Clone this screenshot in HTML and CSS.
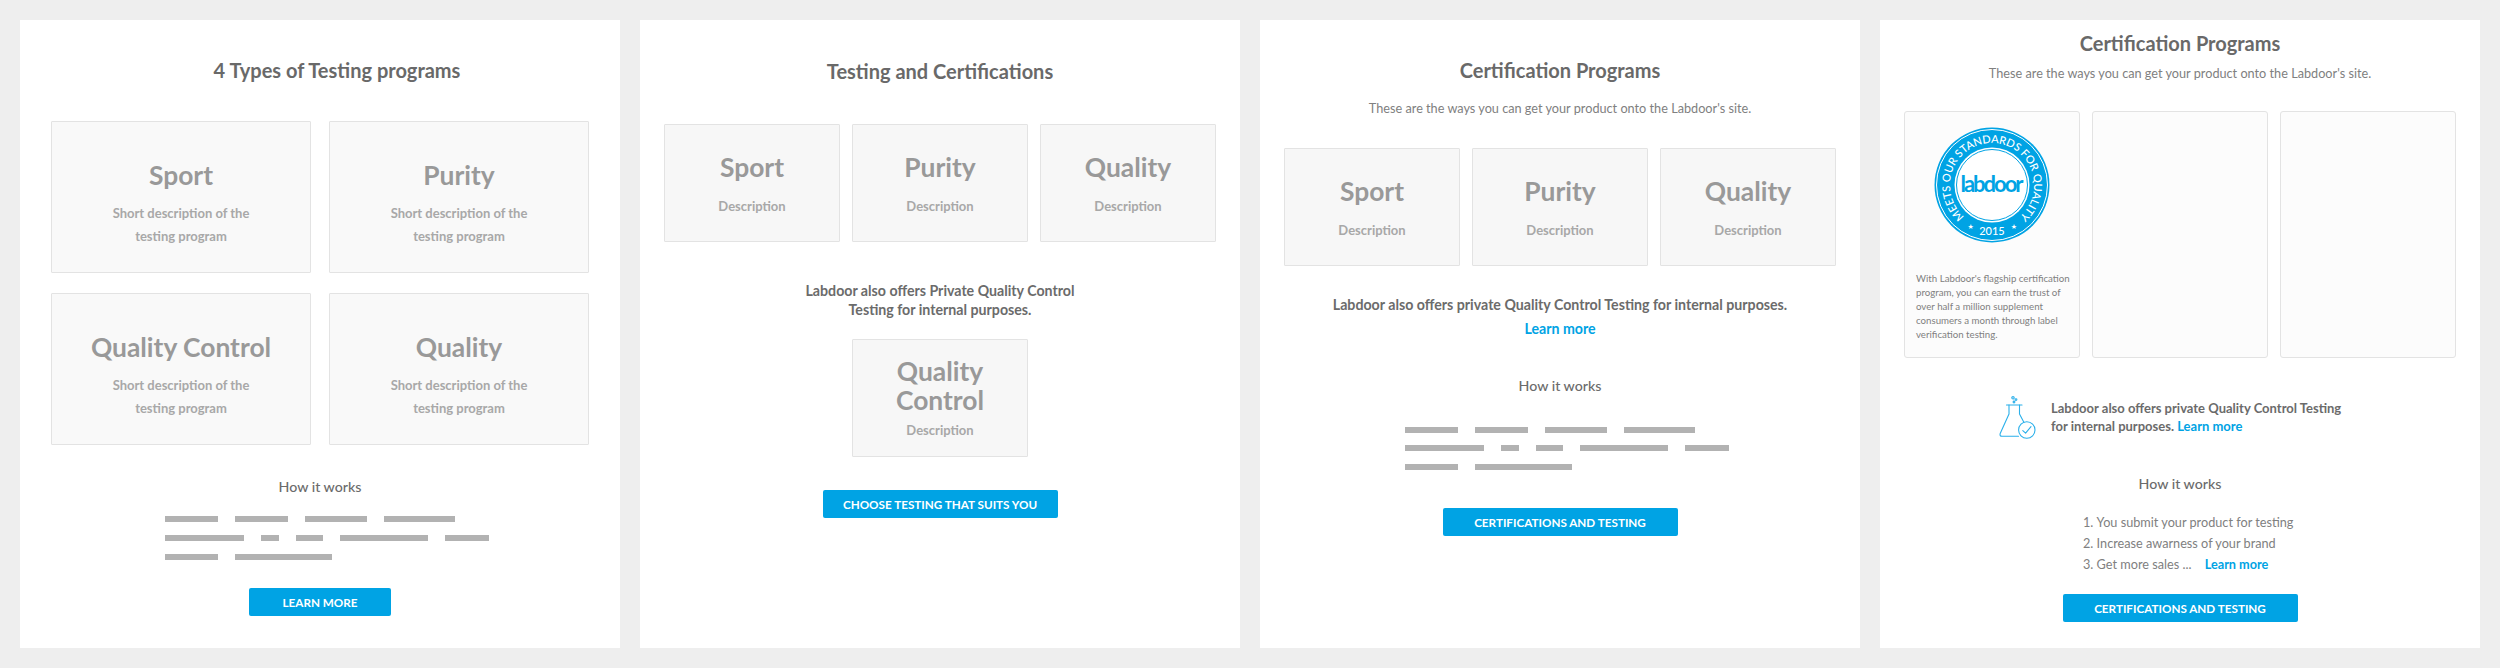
FILE: index.html
```html
<!DOCTYPE html>
<html lang="en">
<head>
<title>Labdoor testing programs - layout options</title>
<meta charset="utf-8">
<link rel="stylesheet" href="styles.css">
</head>
<body>

<!-- option 1: four types, two by two -->
<section class="panel panel-one">
	<h2 class="title">4 Types of Testing programs</h2>
	<div class="grid-two">
		<div class="card card-large"><h3>Sport</h3><p>Short description of the<br>testing program</p></div>
		<div class="card card-large"><h3>Purity</h3><p>Short description of the<br>testing program</p></div>
		<div class="card card-large"><h3>Quality Control</h3><p>Short description of the<br>testing program</p></div>
		<div class="card card-large"><h3>Quality</h3><p>Short description of the<br>testing program</p></div>
	</div>
	<h4 class="how">How it works</h4>
	<div class="bars">
		<div class="bar-row"><i style="width:53px"></i><i style="width:53px"></i><i style="width:62px"></i><i style="width:71px"></i></div>
		<div class="bar-row"><i style="width:79px"></i><i style="width:18px"></i><i style="width:27px"></i><i style="width:88px"></i><i style="width:44px"></i></div>
		<div class="bar-row"><i style="width:53px"></i><i style="width:97px"></i></div>
	</div>
	<a class="btn btn-small">LEARN MORE</a>
</section>

<!-- option 2: three plus private testing card -->
<section class="panel panel-two">
	<h2 class="title">Testing and Certifications</h2>
	<div class="row-three">
		<div class="card card-small"><h3>Sport</h3><p>Description</p></div>
		<div class="card card-small"><h3>Purity</h3><p>Description</p></div>
		<div class="card card-small"><h3>Quality</h3><p>Description</p></div>
	</div>
	<p class="also">Labdoor also offers Private Quality Control<br>Testing for internal purposes.</p>
	<div class="card card-small card-tight"><h3>Quality<br>Control</h3><p>Description</p></div>
	<a class="btn">CHOOSE TESTING THAT SUITS YOU</a>
</section>

<!-- option 3 -->
<section class="panel panel-three">
	<h2 class="title">Certification Programs</h2>
	<p class="sub">These are the ways you can get your product onto the Labdoor's site.</p>
	<div class="row-three">
		<div class="card card-small"><h3>Sport</h3><p>Description</p></div>
		<div class="card card-small"><h3>Purity</h3><p>Description</p></div>
		<div class="card card-small"><h3>Quality</h3><p>Description</p></div>
	</div>
	<p class="also">Labdoor also offers private Quality Control Testing for internal purposes.</p>
	<a class="more">Learn more</a>
	<h4 class="how">How it works</h4>
	<div class="bars">
		<div class="bar-row"><i style="width:53px"></i><i style="width:53px"></i><i style="width:62px"></i><i style="width:71px"></i></div>
		<div class="bar-row"><i style="width:79px"></i><i style="width:18px"></i><i style="width:27px"></i><i style="width:88px"></i><i style="width:44px"></i></div>
		<div class="bar-row"><i style="width:53px"></i><i style="width:97px"></i></div>
	</div>
	<a class="btn">CERTIFICATIONS AND TESTING</a>
</section>

<!-- option 4: badge card and numbered steps -->
<section class="panel panel-four">
	<h2 class="title">Certification Programs</h2>
	<p class="sub">These are the ways you can get your product onto the Labdoor's site.</p>
	<div class="row-three">
		<div class="card card-badge">
			<svg class="badge" viewBox="0 0 116 116" width="116" height="116">
				<defs>
					<path id="arc-top" d="M37 94.4 A42 42 0 1 1 79 94.4"/>
				</defs>
				<circle cx="58" cy="58" r="57.5" fill="#00a3e4"/>
				<circle cx="58" cy="58" r="55.5" fill="none" stroke="#fff" stroke-width="1"/>
				<circle cx="58" cy="58" r="37.5" fill="#fff"/>
				<circle cx="58" cy="58" r="35.5" fill="none" stroke="#00a3e4" stroke-width="1"/>
				<text class="badge-ring"><textPath href="#arc-top" startOffset="50%" text-anchor="middle">MEETS OUR STANDARDS FOR QUALITY</textPath></text>
				<text class="badge-year" x="58" y="108" text-anchor="middle">2015</text>
				<text class="badge-star" x="36.7" y="102" text-anchor="middle">★</text>
				<text class="badge-star" x="80" y="102" text-anchor="middle">★</text>
				<text class="badge-logo" x="58" y="65" text-anchor="middle" textLength="63">labdoor</text>
			</svg>
			<p>With Labdoor's flagship certification<br>program, you can earn the trust of<br>over half a million supplement<br>consumers a month through label<br>verification testing.</p>
		</div>
		<div class="card card-badge"></div>
		<div class="card card-badge"></div>
	</div>
	<div class="offer">
		<svg class="flask" viewBox="0 0 37 43" width="37" height="43" fill="none" stroke="#2bb0ea" stroke-width="1.1" stroke-linecap="round" stroke-linejoin="round">
			<circle cx="14" cy="1.8" r="1.2"/>
			<circle cx="17" cy="3.6" r="0.9"/>
			<circle cx="15" cy="6" r="0.9"/>
			<path d="M7.5 9 H23"/>
			<path d="M10 9 V18 L1.2 37.5 Q0.4 40.3 3 40.3 H19.5"/>
			<path d="M20.5 9 V18 L25 26.5"/>
			<circle cx="27.8" cy="34" r="8.2"/>
			<path d="M23.8 34.6 L26.6 37.2 L32 30.6"/>
		</svg>
		<p>Labdoor also offers private Quality Control Testing<br>for internal purposes. <a class="more-inline">Learn more</a></p>
	</div>
	<h4 class="how">How it works</h4>
	<ol class="steps">
		<li>You submit your product for testing</li>
		<li>Increase awarness of your brand</li>
		<li>Get more sales ... <a class="more-inline">Learn more</a></li>
	</ol>
	<a class="btn">CERTIFICATIONS AND TESTING</a>
</section>

</body>
</html>
```

FILE: styles.css
```css
* { box-sizing: border-box; }

body {
	margin: 0;
	height: 668px;
	padding: 20px;
	display: flex;
	gap: 20px;
	background: #eee;
	font-family: "Lato", "Liberation Sans", sans-serif;
	color: #666;
	overflow: hidden;
}

h2, h3, h4, p, ol { margin: 0; padding: 0; }

.panel {
	width: 600px;
	height: 628px;
	display: flex;
	flex-direction: column;
	align-items: center;
	background: #fff;
	text-align: center;
}

.title {
	font-size: 20px;
	line-height: 30px;
	font-weight: 700;
	color: #696969;
}

.sub {
	font-size: 12.7px;
	line-height: 20px;
	color: #808080;
}

.how {
	font-size: 14.2px;
	line-height: 20px;
	font-weight: 500;
	color: #6b6b6b;
}

.also {
	font-size: 14.2px;
	line-height: 18.5px;
	font-weight: 700;
	color: #6b6b6b;
}

.btn {
	display: block;
	width: 235px;
	height: 28px;
	border-radius: 2px;
	background: #00a3e4;
	color: #fff;
	font-size: 11.7px;
	line-height: 28px;
	font-weight: 700;
}

.btn-small { width: 142px; }

.more {
	font-size: 14.2px;
	line-height: 20px;
	font-weight: 700;
	color: #00a3e4;
}

.more-inline {
	font-weight: 700;
	color: #00a3e4;
}

/* cards */
.grid-two {
	display: grid;
	grid-template-columns: 260px 260px;
	column-gap: 18px;
	row-gap: 20px;
}

.row-three {
	display: flex;
	gap: 12px;
}

.card {
	display: flex;
	flex-direction: column;
	align-items: center;
	justify-content: center;
	border: 1px solid #e3e3e3;
	border-radius: 1px;
	background: #f7f7f7;
}

.card h3 {
	font-size: 26.4px;
	line-height: 34px;
	font-weight: 700;
	color: #999;
}

.card p {
	font-size: 13px;
	font-weight: 700;
	color: #a8a8a8;
}

.card-large {
	height: 152px;
	padding-top: 12px;
	background: #f9f9f9;
}

.card-large h3 { margin-bottom: 10px; }
.card-large p { line-height: 22.6px; }

.card-small {
	width: 176px;
	height: 118px;
}

.card-small h3 { margin-bottom: 12px; }
.card-small p { line-height: 20px; }

.card-tight { padding-top: 1px; }
.card-tight h3 { line-height: 29px; margin-bottom: 5px; }

.card-badge {
	width: 176px;
	height: 247px;
	justify-content: flex-start;
	align-items: flex-start;
	border-radius: 3px;
	background: #fcfcfc;
}

.card-badge p {
	padding-left: 11px;
	font-size: 9.7px;
	line-height: 14px;
	font-weight: 400;
	color: #808080;
	text-align: left;
	white-space: nowrap;
}

.badge {
	display: block;
	margin: 15px 0 28px 29px;
}

.badge-ring, .badge-year {
	font-family: "Lato", sans-serif;
	fill: #fff;
	font-size: 11px;
	font-weight: 500;
}

.badge-star { fill: #fff; font-size: 7px; font-family: "DejaVu Sans", sans-serif; }

.badge-logo {
	font-family: "Lato", sans-serif;
	fill: #00a3e4;
	font-size: 22px;
	font-weight: 700;
}

/* grey placeholder lines */
.bars {
	align-self: flex-start;
	margin-left: 145px;
	display: flex;
	flex-direction: column;
	gap: 13px;
}

.bar-row {
	display: flex;
	gap: 17px;
}

.bar-row i {
	display: block;
	height: 6px;
	background: #b2b2b2;
}

/* panel 1 */
.panel-one { padding-top: 35px; }
.panel-one .title { margin-left: 34px; }
.panel-one .grid-two { margin-top: 36px; }
.panel-one .how { margin-top: 32px; }
.panel-one .bars { margin-top: 19px; }
.panel-one .btn { margin-top: 28px; }

/* panel 2 */
.panel-two { padding-top: 36px; }
.panel-two .row-three { margin-top: 38px; }
.panel-two .also { margin-top: 40px; }
.panel-two .card-tight { margin-top: 20px; }
.panel-two .btn { margin-top: 33px; }

/* panel 3 */
.panel-three { padding-top: 35px; }
.panel-three .sub { margin-top: 13px; }
.panel-three .row-three { margin-top: 30px; }
.panel-three .also { margin-top: 30px; }
.panel-three .more { margin-top: 4px; }
.panel-three .how { margin-top: 37px; }
.panel-three .bars { margin-top: 31px; gap: 12.5px; }
.panel-three .btn { margin-top: 38px; }

/* panel 4 */
.panel-four { padding-top: 8px; }
.panel-four .sub { margin-top: 5px; }
.panel-four .row-three { margin-top: 28px; }
.panel-four .how { margin-top: 35px; }
.panel-four .btn { margin-top: 19px; }

.offer {
	align-self: flex-start;
	margin: 38px 0 0 119px;
	display: flex;
	align-items: center;
	gap: 15px;
}

.offer p {
	font-size: 13px;
	line-height: 17.6px;
	font-weight: 700;
	color: #6b6b6b;
	text-align: left;
}

.steps {
	align-self: flex-start;
	margin: 18px 0 0 203px;
	list-style-position: inside;
	font-size: 12.7px;
	line-height: 21px;
	color: #808080;
	text-align: left;
}

.steps .more-inline { margin-left: 10px; }
```
